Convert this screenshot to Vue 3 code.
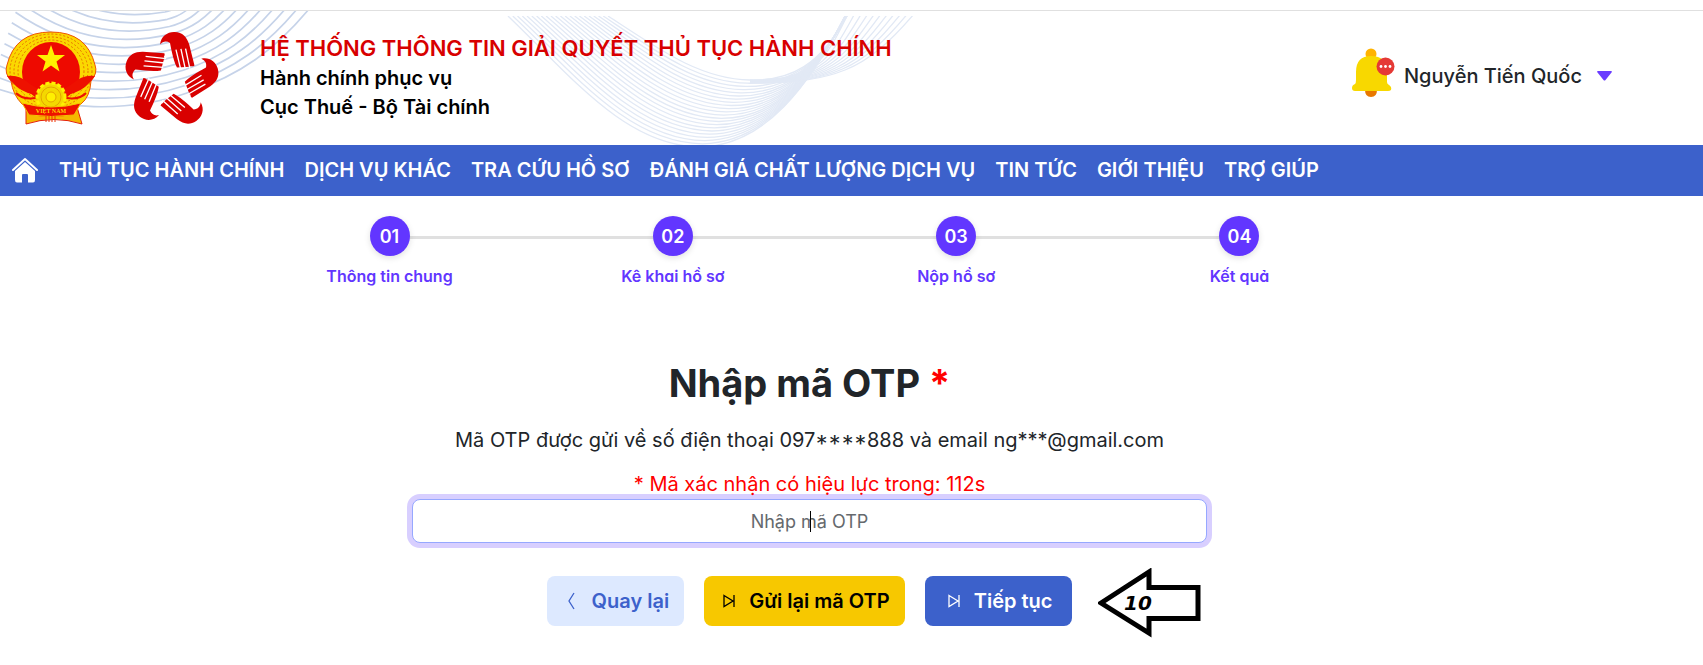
<template>
  <div class="page">
    <header class="header">
      <svg class="waves" width="930" height="134" viewBox="0 11 930 134" fill="none" aria-hidden="true">
        <path v-for="d in leftWave" :key="d" :d="d" stroke="#c6d3e9" stroke-width="1.7" />
        <g clip-path="url(#ribbon)">
          <path v-for="d in rightWave" :key="d" :d="d" stroke="#e2e9f5" stroke-width="1.3" />
        </g>
        <clipPath id="ribbon"><rect x="480" y="16" width="450" height="130" /></clipPath>
      </svg>

      <a class="brand" href="#" aria-label="Trang chủ">
        <!-- national emblem -->
        <svg class="emblem" width="92" height="94" viewBox="0 0 92 94">
          <path d="M21 76 L72 76 L77 93 Q49 84 21 93 Z" fill="#f5b800" stroke="#e5200a" />
          <path d="M6 50 Q-1 42 2 34 Q10 1 46 1 Q82 1 90 34 Q93 42 86 50 Q85 66 76 73 Q60 82 46 82 Q31 82 17 73 Q8 64 6 50Z" fill="#fbd800" stroke="#ee5500" />
          <ellipse v-for="n in 3" :key="n" cx="46" cy="40" :rx="29 + n * 4" :ry="28 + n * 3"
                   fill="none" stroke="#e87000" stroke-width="1" stroke-dasharray="2 2" />
          <ellipse cx="46" cy="41" rx="29" ry="30" fill="#ee0a00" />
          <path d="M2 45 Q14 43 25 53 L33 58 L33 65 L23 62 Q11 58 2 45Z" fill="#ee1100" />
          <path d="M90 45 Q78 43 67 53 L59 58 L59 65 L69 62 Q81 58 90 45Z" fill="#ee1100" />
          <path d="M11 62 Q17 69 31 67 M81 62 Q75 69 61 67" fill="none" stroke="#ee1100" stroke-width="2" />
          <path d="M46 14 L49.5 24 L60 24 L51.5 30.5 L54.5 40.5 L46 34.5 L37.5 40.5 L40.5 30.5 L32 24 L42.5 24Z" fill="#fff000" />
          <circle cx="46" cy="66" r="14" fill="#f4d800" stroke="#fff000" stroke-width="3" stroke-dasharray="4 2" />
          <circle cx="46" cy="66" r="10" fill="none" stroke="#e4a500" />
          <circle cx="46" cy="66" r="5" fill="#fff000" stroke="#e4a500" />
          <path d="M17 72 Q46 80 76 72 L69 84 Q46 87 24 84Z" fill="#ee1100" stroke="#f5c400" />
          <text x="46" y="82" text-anchor="middle">VIỆT NAM</text>
          <path d="M41 85 v6 M44 85 v6 M47 85 v6 M50 85 v6" stroke="#ee3300" />
        </svg>
        <!-- five hands forming a star -->
        <svg class="hands" width="88" height="94" viewBox="381 92 264 284">
          <g v-for="n in 5" :key="n" :transform="`rotate(${(n - 1) * 72} 513 240)`">
            <path d="M480 133 C482 108 503 94 524 95 C548 96 561 110 568 133 L584 196 Q580 200 572 198 L571 200 L531 202 C522 184 516 160 510 128 C499 121 488 123 480 133Z" fill="#d90000" />
            <path d="M528 148 L542 206 M543 146 L556 206 M557 145 L570 206" stroke="#fff" stroke-width="4" />
          </g>
        </svg>
      </a>

      <div class="titles">
        <h1>HỆ THỐNG THÔNG TIN GIẢI QUYẾT THỦ TỤC HÀNH CHÍNH</h1>
        <p>Hành chính phục vụ</p>
        <p>Cục Thuế - Bộ Tài chính</p>
      </div>

      <div class="user">
        <button class="bell" type="button" aria-label="Thông báo">
          <svg width="43" height="50" viewBox="0 0 43 50">
            <circle cx="19" cy="6" r="5.5" fill="#ffb300" />
            <path d="M13 42 h12 q0 7 -6 7 t-6 -7Z" fill="#e87800" />
            <path d="M4 24 Q4 8 19 8 Q35 8 35 24 V34 Q35 36 37 37 Q40 39 39 42 Q38 43 36 43 H3 Q0 43 0 40 Q0 37 3 36 Q4 35 4 32Z" fill="#f8d800" />
            <circle cx="33.500" cy="18.500" r="9" fill="#e53935" />
            <circle v-for="x in [29, 33.5, 38]" :key="x" :cx="x" cy="18.500" r="1.400" fill="#fff" />
          </svg>
        </button>
        <button class="account" type="button">
          Nguyễn Tiến Quốc
          <svg width="15" height="10" viewBox="0 0 15 10"><path d="M1 0 H14 Q15.500 0 14.500 1.500 L8.500 9 Q7.500 10 6.500 9 L.5 1.500 Q-.5 0 1 0Z" fill="#6a3cff" /></svg>
        </button>
      </div>
    </header>

    <nav class="nav">
      <a class="home" href="#" aria-label="Trang chủ">
        <svg width="26" height="26" viewBox="0 0 26 26">
          <path d="M1 13 L13 2 L25 13" fill="none" stroke="#fff" stroke-width="2" stroke-linecap="round" stroke-linejoin="round" />
          <path d="M13 5 L23 14 V23 Q23 25.500 21 25.500 H16 V18 Q16 17 15 17 H11 Q10 17 10 18 V25.500 H5 Q3 25.500 3 23 V14Z" fill="#fff" />
        </svg>
      </a>
      <a v-for="item in menu" :key="item" href="#">{{ item }}</a>
    </nav>

    <main class="main">
      <ol class="steps">
        <li v-for="(step, i) in steps" :key="step">
          <span class="dot">0{{ i + 1 }}</span>
          <span class="label">{{ step }}</span>
        </li>
      </ol>

      <form class="otp" @submit.prevent="submit">
        <h2><label for="otp">Nhập mã OTP <span class="required">*</span></label></h2>
        <p class="sent">Mã OTP được gửi về số điện thoại <span class="phone">097****888</span> và email ng***@gmail.com</p>
        <p class="timer">* Mã xác nhận có hiệu lực trong: {{ seconds }}s</p>
        <div class="field">
          <input id="otp" v-model="otp" type="text" placeholder="Nhập mã OTP" autocomplete="off" />
          <span v-if="!otp" class="cursor"></span>
        </div>

        <div class="actions">
          <button class="btn back" type="button">
            <svg width="18" height="18" viewBox="0 0 18 18"><path d="M11 1 L6 9 L11 17" /></svg>
            Quay lại
          </button>
          <button class="btn resend" type="button" @click="resend">
            <svg width="18" height="18" viewBox="0 0 18 18"><path d="M4 3.500 L13 9 L4 14.500Z M14 3 V15" /></svg>
            Gửi lại mã OTP
          </button>
          <button class="btn next" type="submit">
            <svg width="18" height="18" viewBox="0 0 18 18"><path d="M4 3.500 L13 9 L4 14.500Z M14 3 V15" /></svg>
            Tiếp tục
          </button>
          <svg class="pointer" width="104" height="70" viewBox="0 0 104 70">
            <path d="M3 35 L51 4 V19.500 H100 V50.500 H51 V65 Z" fill="#fff" stroke="#000" stroke-width="5" />
            <text x="26" y="42">10</text>
          </svg>
        </div>
      </form>
    </main>
  </div>
</template>

<script setup>
import { ref } from 'vue'

const menu = [
  'THỦ TỤC HÀNH CHÍNH', 'DỊCH VỤ KHÁC', 'TRA CỨU HỒ SƠ',
  'ĐÁNH GIÁ CHẤT LƯỢNG DỊCH VỤ', 'TIN TỨC', 'GIỚI THIỆU', 'TRỢ GIÚP'
]
const steps = ['Thông tin chung', 'Kê khai hồ sơ', 'Nộp hồ sơ', 'Kết quả']

const otp     = ref('')
const seconds = ref(112)

function submit() {
  if (!otp.value.trim()) return
  otp.value = otp.value.trim()
}

function resend() {
  otp.value     = ''
  seconds.value = 112
}

// blend one curve into another, giving `count` lines between them
function blend(from, to, count) {
  return Array.from({ length: count }, (_, n) => {
    const t = n / (count - 1)
    const p = from.map((v, i) => Math.round((v + (to[i] - v) * t) * 10) / 10)
    return `M${p[0]} ${p[1]} C${p.slice(2, 8).join(' ')} ${p.slice(8).join(' ')}`
  })
}

const leftWave = blend(
  [-10, 86, 60, 112, 130, 113, 190, 92, 240, 75, 275, 50, 309, 9],
  [30, -30, 80, 18, 130, 18, 165, 12, 175, 10, 180, 6, 185, 0],
  12
)
const rightWave = blend(
  [508, 16, 570, 75, 625, 146, 700, 147, 765, 146, 810, 85, 846, 14],
  [608, 16, 660, 50, 700, 79, 750, 80, 790, 81, 820, 66, 848, 14],
  22
).concat(blend(
  [750, 80, 780, 80, 800, 78, 820, 60, 832, 48, 840, 30, 848, 14],
  [750, 83, 790, 84, 820, 80, 845, 70, 870, 60, 890, 42, 914, 14],
  11
))
</script>

<style>
body { background: #fff; }
</style>

<style scoped>
* { box-sizing: border-box; margin: 0; padding: 0; }
.page { font-family: Inter, 'Noto Sans', sans-serif; font-size: 20px; color: #212529; padding-top: 10px; }
button { border: none; background: none; font: inherit; color: inherit; cursor: pointer; }
a { color: inherit; text-decoration: none; }

.header { position: relative; display: flex; align-items: center; height: 135px;
          padding: 0 91px 0 5px; border-top: 1px solid #e0e0e0; }
.waves { position: absolute; left: 0; top: 0; }
.brand, .titles, .user { position: relative; display: flex; }
.brand { gap: 30px; margin-right: 45px; }
.hands { overflow: visible; }
.emblem text { font: bold 6px 'Liberation Serif', serif; fill: #ffd800; }
.titles { flex: 1; flex-direction: column; font-weight: 600; color: #000; line-height: 29px; }
.titles h1 { font-size: 22px; font-weight: 600; margin-bottom: 1px; color: #d80000; }

.user { align-items: center; gap: 9px; padding-bottom: 4px; font-weight: 500; }
.bell { display: flex; padding-bottom: 6px; }
.account { display: flex; align-items: center; gap: 15px; }

.nav { display: flex; align-items: center; gap: 20px; height: 51px; padding: 0 12px 2px;
       background: #3c61cb; color: #fff; font-weight: 600; }
.nav a { white-space: nowrap; }
.home { display: flex; margin-right: 1px; }

.main { padding: 20px 84px 28px 0; }
.steps { display: flex; list-style: none; width: 70%; max-width: 1134px; margin: 0 auto; position: relative; left: 5px; }
.steps li { position: relative; flex: 1; display: flex; flex-direction: column; align-items: center; gap: 8px; }
.steps li + li::before { content: ''; position: absolute; top: 20px; right: 50%; width: 100%;
                         height: 3px; background: #e0e0e0; }
.dot { position: relative; z-index: 1; width: 40px; height: 40px; border-radius: 50%; background: #6236ff;
       color: #fff; font-size: 18px; font-weight: 600; line-height: 42px; text-align: center;
       box-shadow: 0 2px 6px rgba(0, 0, 0, .12); }
.label { font-size: 16px; font-weight: 600; line-height: 24px; color: #6236ff;
         font-feature-settings: 'cv11'; }

.otp { display: flex; flex-direction: column; align-items: center; margin-top: 71px; text-align: center; }
.otp h2 { font-size: 38px; font-weight: 700; line-height: 48px; margin-bottom: 18px; }
.required { color: #f00; }
.sent { line-height: 30px; margin-bottom: 14px; }
.phone { font-feature-settings: 'case'; }
.timer { position: relative; z-index: 1; line-height: 30px; color: #f00; }
.field { position: relative; width: 100%; max-width: 795px; }
.field input { display: block; width: 100%; height: 44px; border: 1px solid #96a8ff; border-radius: 8px;
               outline: none; box-shadow: 0 0 0 5px #d8cfff; text-align: center;
               font: 18px Inter, sans-serif; color: #212529; }
.field input::placeholder { color: #65696d; }
.cursor { position: absolute; left: 50%; top: 12px; width: 1px; height: 21px; background: #000; }

.actions { position: relative; display: flex; gap: 20px; margin-top: 33px; }
.btn { display: flex; align-items: center; gap: 11px; height: 50px; padding: 0 15px 0 16px;
       border-radius: 8px; font-weight: 600; white-space: nowrap; }
.btn svg { fill: none; stroke: currentColor; stroke-width: 1.3; }
.back { background: #dde9ff; color: #3c61cb; }
.resend { background: #f7c800; color: #000; }
.next { background: #3c61cb; color: #fff; padding: 0 20px; }
.pointer { position: absolute; left: 100%; top: -8px; margin-left: 26px; }
.pointer text { font: italic bold 20px 'DejaVu Sans', sans-serif; }
</style>
